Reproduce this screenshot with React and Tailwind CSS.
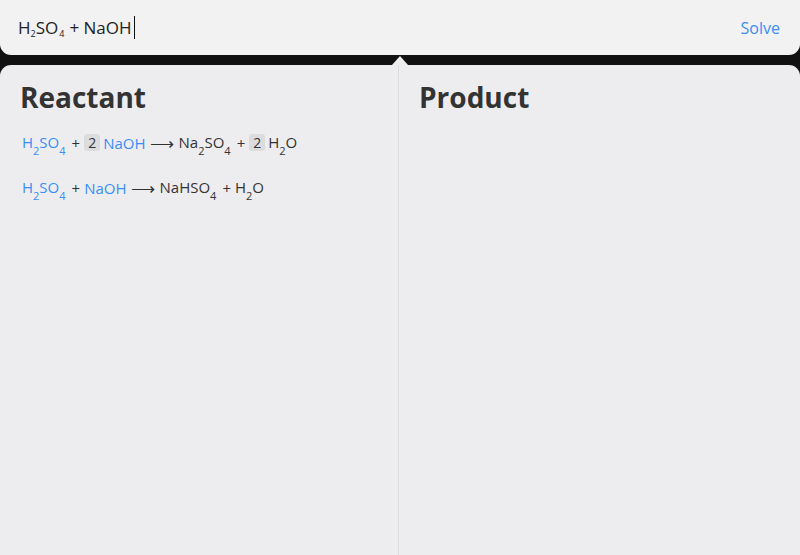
import React from "react";

const Sub = ({ children }) => (
  <sub className="text-[11px] leading-none" style={{ verticalAlign: "-4px" }}>{children}</sub>
);

const Coef = ({ n }) => (
  <span className="inline-block bg-[#dcdcdf] rounded-[3px] px-[4px] text-[14px] leading-[17px] mr-[3px] text-[#333]">{n}</span>
);

const Plus = () => <span className="ml-[6px] mr-[4px]">+</span>;
const Arrow = () => <span className="ml-[5px] mr-[6px] inline-block scale-x-[1.12]">⟶</span>;

export default function App() {
  return (
    <div className="w-[800px] h-[555px] bg-[#111111] flex flex-col overflow-hidden" style={{ fontFamily: '"Open Sans", sans-serif' }}>
      <div className="h-[55px] bg-[#f2f2f2] rounded-b-[11px] flex items-center justify-between pl-[18px] pr-[20px] shrink-0">
        <div className="flex items-center text-[17px] text-[#222] leading-none">
          <span>H</span>
          <span className="text-[9px] relative top-[6px]">2</span>
          <span>SO</span>
          <span className="text-[9px] relative top-[6px] ml-[1px]">4</span>
          <span className="ml-[5px]">+ NaOH</span>
          <span className="inline-block w-[1px] h-[23px] bg-[#111] ml-[2px]"></span>
        </div>
        <span className="text-[16px] text-[#3a8ef6]">Solve</span>
      </div>
      <div className="relative mt-[10px] flex-1 bg-[#ededef] rounded-t-[11px] flex">
        <div className="absolute left-[392px] top-[-9px] w-0 h-0 border-l-[8px] border-r-[8px] border-b-[9px] border-l-transparent border-r-transparent border-b-[#ededef]"></div>
        <div className="w-[399px] border-r border-[#dcdcde] pl-[20px] pt-[13px]">
          <h2 className="text-[28px] font-bold text-[#333] leading-[38px]">Reactant</h2>
          <div className="mt-[16px] text-[15px] text-[#333] leading-[20px] pl-[2px]">
            <div className="flex items-center">
              <span className="text-[#3a8ef6]">H<Sub>2</Sub>SO<Sub>4</Sub></span>
              <Plus />
              <Coef n="2" />
              <span className="text-[#3a8ef6]">NaOH</span>
              <Arrow />
              <span>Na<Sub>2</Sub>SO<Sub>4</Sub></span>
              <Plus />
              <Coef n="2" />
              <span>H<Sub>2</Sub>O</span>
            </div>
            <div className="flex items-center mt-[24px]">
              <span className="text-[#3a8ef6]">H<Sub>2</Sub>SO<Sub>4</Sub></span>
              <Plus />
              <span className="text-[#3a8ef6]">NaOH</span>
              <Arrow />
              <span>NaHSO<Sub>4</Sub></span>
              <Plus />
              <span>H<Sub>2</Sub>O</span>
            </div>
          </div>
        </div>
        <div className="flex-1 pl-[20px] pt-[13px]">
          <h2 className="text-[28px] font-bold text-[#333] leading-[38px]">Product</h2>
        </div>
      </div>
    </div>
  );
}
